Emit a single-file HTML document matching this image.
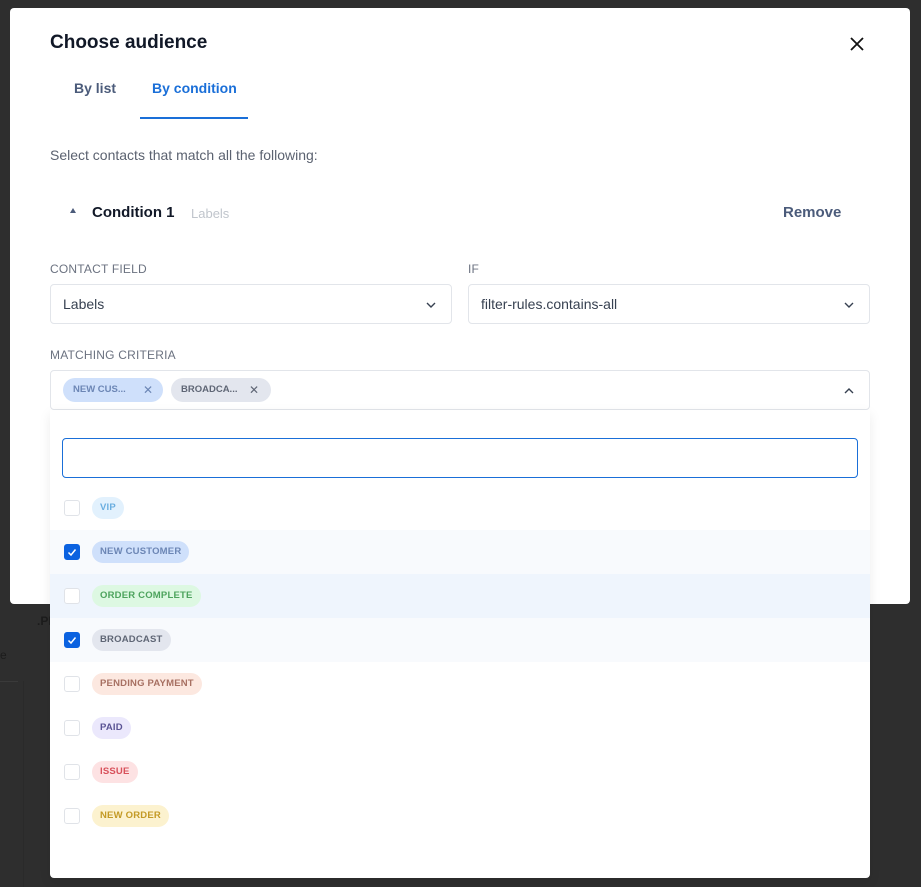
<!DOCTYPE html>
<html><head><style>
*{box-sizing:border-box;margin:0;padding:0}
body{width:921px;height:887px;background:#2e2e2e;font-family:"Liberation Sans",sans-serif;position:relative;overflow:hidden}
.modal{position:absolute;left:10px;top:8px;width:900px;height:596px;background:#fff;border-radius:4px}
.abs{position:absolute}
.lbl{font-size:12px;color:#6b7280;letter-spacing:.2px}
.sel{position:absolute;height:40px;border:1px solid #e2e5ea;border-radius:4px;font-size:14px;color:#374151;padding:11px 12px}
.chev{position:absolute;right:14px;top:14px}
.dd{position:absolute;left:50px;top:410px;width:820px;height:468px;background:#fff;border-radius:0 0 4px 4px;box-shadow:0 4px 12px rgba(0,0,0,.08)}
.row{position:absolute;left:0;width:820px;height:44px}
.cb{position:absolute;left:14px;top:14px;width:16px;height:16px;border:1px solid #e0e3e8;border-radius:3px;background:#fff}
.cb.on{background:#0b62e0;border-color:#0b62e0}
.tag{position:absolute;left:42px;top:11px;height:22px;border-radius:11px;padding:0 8px;font-size:9.5px;font-weight:bold;line-height:22px;letter-spacing:.2px}
</style></head><body>
<div class="abs" style="left:37px;top:614px;font-size:12px;color:#1c1c1c;font-weight:bold">.PF</div>
<div class="abs" style="left:0;top:648px;font-size:12px;color:#1c1c1c">e</div>
<div class="abs" style="left:0;top:681px;width:18px;height:1px;background:#3a3a3a"></div>
<div class="abs" style="left:23px;top:681px;width:1px;height:206px;background:#2a2a2a"></div>
<div class="modal">
  <div class="abs" style="left:40px;top:24px;font-size:19px;font-weight:bold;color:#111827">Choose audience</div>
  <svg class="abs" style="left:839px;top:28px" width="16" height="16" viewBox="0 0 16 16"><path d="M2 2L14 14M14 2L2 14" stroke="#111" stroke-width="1.8"/></svg>
  <div class="abs" style="left:64px;top:72px;font-size:14px;font-weight:bold;color:#4b5b7a">By list</div>
  <div class="abs" style="left:142px;top:72px;font-size:14px;font-weight:bold;color:#1a6fd8">By condition</div>
  <div class="abs" style="left:130px;top:109px;width:108px;height:2px;background:#1a6fd8"></div>
  <div class="abs" style="left:40px;top:139px;font-size:14px;color:#5b6270">Select contacts that match all the following:</div>
  <div class="abs" style="left:60px;top:200px;width:0;height:0;border-left:3px solid transparent;border-right:3px solid transparent;border-bottom:5px solid #4b5b7a"></div>
  <div class="abs" style="left:82px;top:196px;font-size:15px;font-weight:bold;color:#111827">Condition 1</div>
  <div class="abs" style="left:181px;top:198px;font-size:13px;color:#c0c5cc">Labels</div>
  <div class="abs" style="left:773px;top:196px;font-size:15px;font-weight:bold;color:#4b5b7a">Remove</div>
  <div class="abs lbl" style="left:40px;top:254px">CONTACT FIELD</div>
  <div class="abs lbl" style="left:458px;top:254px">IF</div>
  <div class="sel" style="left:40px;top:276px;width:402px">Labels<svg class="chev" width="12" height="12" viewBox="0 0 12 12"><path d="M2 4L6 8L10 4" stroke="#374151" stroke-width="1.4" fill="none"/></svg></div>
  <div class="sel" style="left:458px;top:276px;width:402px">filter-rules.contains-all<svg class="chev" width="12" height="12" viewBox="0 0 12 12"><path d="M2 4L6 8L10 4" stroke="#374151" stroke-width="1.4" fill="none"/></svg></div>
  <div class="abs lbl" style="left:40px;top:340px">MATCHING CRITERIA</div>
  <div class="sel" style="left:40px;top:362px;width:820px;padding:0">
    <div class="abs" style="left:12px;top:7px;width:100px;height:24px;border-radius:12px;background:#cfe0fb;font-size:9.5px;font-weight:bold;color:#6c86b5;line-height:24px;padding-left:10px">NEW CUS...<span style="position:absolute;left:80px;font-size:12px;font-weight:normal">✕</span></div>
    <div class="abs" style="left:120px;top:7px;width:100px;height:24px;border-radius:12px;background:#e3e6ee;font-size:9.5px;font-weight:bold;color:#5f6675;line-height:24px;padding-left:10px">BROADCA...<span style="position:absolute;left:78px;font-size:12px;font-weight:normal">✕</span></div>
    <svg class="chev" width="12" height="12" viewBox="0 0 12 12"><path d="M2 8L6 4L10 8" stroke="#374151" stroke-width="1.4" fill="none"/></svg>
  </div>
</div>
<div class="dd">
  <div class="abs" style="left:12px;top:28px;width:796px;height:40px;border:1.5px solid #1a6fd8;border-radius:4px;background:#fff"></div>
  <div class="row" style="top:76px"><div class="cb"></div><div class="tag" style="background:#e2f1fd;color:#6aaee0">VIP</div></div>
  <div class="row" style="top:120px;background:#f8fafd"><div class="cb on"><svg width="14" height="14" viewBox="0 0 14 14"><path d="M3.5 7.5L6 10L10.5 4.5" stroke="#fff" stroke-width="1.5" fill="none"/></svg></div><div class="tag" style="background:#cfe0fb;color:#6c86b5">NEW CUSTOMER</div></div>
  <div class="row" style="top:164px;background:#eff5fd"><div class="cb"></div><div class="tag" style="background:#ddf8e2;color:#4da35d">ORDER COMPLETE</div></div>
  <div class="row" style="top:208px;background:#f8fafd"><div class="cb on"><svg width="14" height="14" viewBox="0 0 14 14"><path d="M3.5 7.5L6 10L10.5 4.5" stroke="#fff" stroke-width="1.5" fill="none"/></svg></div><div class="tag" style="background:#e3e6ee;color:#5f6675">BROADCAST</div></div>
  <div class="row" style="top:252px"><div class="cb"></div><div class="tag" style="background:#fce8e0;color:#a77062">PENDING PAYMENT</div></div>
  <div class="row" style="top:296px"><div class="cb"></div><div class="tag" style="background:#ebe8fc;color:#5a5394">PAID</div></div>
  <div class="row" style="top:340px"><div class="cb"></div><div class="tag" style="background:#fde2e3;color:#d8505a">ISSUE</div></div>
  <div class="row" style="top:384px"><div class="cb"></div><div class="tag" style="background:#fcf2cf;color:#c39a25">NEW ORDER</div></div>
</div>
</body></html>
